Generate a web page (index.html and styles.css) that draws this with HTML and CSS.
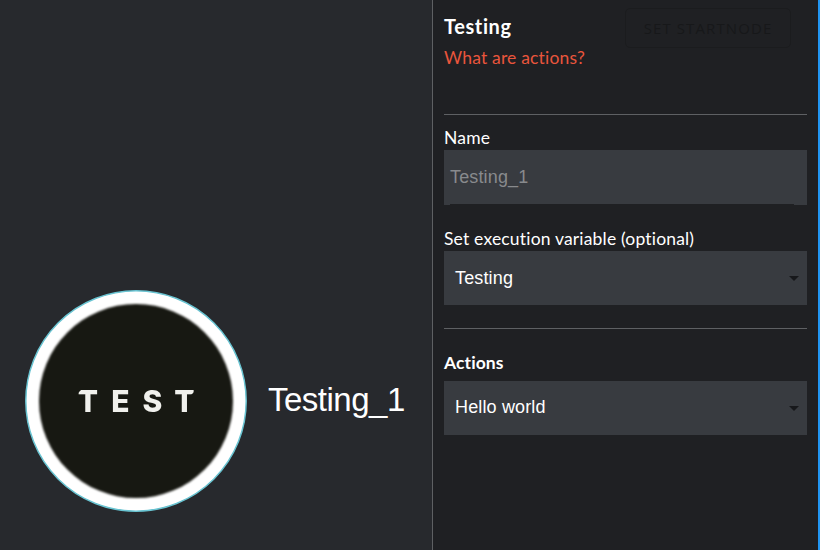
FILE: index.html
```html
<!DOCTYPE html>
<html lang="en">
<head>
<meta charset="utf-8">
<title>Workflow editor</title>
<link rel="stylesheet" href="styles.css">
</head>
<body>
<div class="editor">
  <main class="canvas">
    <div class="node">
      <svg class="node-image" viewBox="0 0 224 224" role="img" aria-label="Test">
        <circle cx="112" cy="112" r="110.2" class="ring"/>
        <circle cx="112" cy="112" r="97" class="disc"/>
        <g class="logo">
          <text x="64" y="123.3">T</text>
          <text x="96.3" y="123.3">E</text>
          <text x="128.5" y="123.3">S</text>
          <text x="160.5" y="123.3">T</text>
        </g>
        <path class="cut" d="M53 100h5l-5 5zM166 107h6v-6z"/>
      </svg>
      <span class="node-label">Testing_1</span>
    </div>
  </main>
  <aside class="panel">
    <header class="head">
      <div>
        <h1 class="title">Testing</h1>
        <a class="help">What are actions?</a>
      </div>
      <button class="start" disabled>SET STARTNODE</button>
    </header>
    <section class="group fields">
      <label class="label name">Name</label>
      <div class="field input"><span class="ph">Testing_1</span></div>
      <label class="label variable">Set execution variable (optional)</label>
      <div class="field select"><span>Testing</span><svg class="arrow" viewBox="0 0 10 5"><path d="M0 0l5 5 5-5z"/></svg></div>
    </section>
    <section class="group actions">
      <h2 class="subtitle">Actions</h2>
      <div class="field select"><span class="action-name">Hello world</span><svg class="arrow" viewBox="0 0 10 5"><path d="M0 0l5 5 5-5z"/></svg></div>
    </section>
  </aside>
</div>
</body>
</html>
```
FILE: styles.css
```css
* { box-sizing: border-box; }
body { margin: 0; background: #1f2023; color: #fff; font-family: Lato, sans-serif; }
.editor { display: flex; width: 820px; height: 550px; overflow: hidden; }
.canvas { position: relative; width: 432px; background: #27292d; }
.node { position: absolute; left: 24px; top: 289px; display: flex; align-items: center; }
.node-image { width: 224px; height: 224px; flex: none; }
.ring { fill: #fff; stroke: #69c4d2; stroke-width: 1.5; }
.disc { fill: #171812; filter: blur(0.8px); }
.cut { fill: #171812; }
.logo { fill: #f0f0ec; font: 800 30px Inter, sans-serif; filter: blur(0.7px); text-anchor: middle; }
.node-label { margin-left: 20px; padding-bottom: 2px; font: 33px/38px "Liberation Sans", sans-serif; letter-spacing: -0.5px; }
.panel { width: 388px; border-left: 1px solid #5e6063; border-right: 2px solid #2196f3; padding: 0 11px; background: #1f2023; }
.head { display: flex; justify-content: space-between; height: 114px; }
.title { margin: 13px 0 0; font-size: 20px; line-height: 26px; font-weight: 700; letter-spacing: .6px; }
.help { display: block; margin-top: 6px; color: #e9553c; font-size: 17.5px; line-height: 26px; letter-spacing: .18px; }
.start { width: 166px; height: 40px; margin: 8px 16px 0 0; padding: 0; border: 1px solid #1b1c1e; border-radius: 5px; background: transparent; color: #17181a; font: 15px "Open Sans", sans-serif; letter-spacing: 1.1px; }
.group { border-top: 1px solid #5e6063; }
.fields { height: 214px; padding-top: 11px; }
.label { display: block; height: 24px; font-size: 17.5px; line-height: 23px; letter-spacing: .18px; }
.variable { margin-top: 22px; }
.field { display: flex; align-items: center; height: 54px; background: #383b40; font: 18px/22px "Liberation Sans", sans-serif; letter-spacing: .15px; }
.input { height: 55px; padding: 0 0 2px 6px; position: relative; color: #888a8d; }
.input::after { content: ""; position: absolute; left: 6px; right: 13px; bottom: 0; height: 1px; background: #1f2023; }
.select { justify-content: space-between; padding: 0 8px 0 11px; }
.action-name { padding-bottom: 2px; }
.arrow { width: 10px; height: 5px; fill: #17181b; }
.actions { padding-top: 22px; }
.subtitle { margin: 0; height: 30px; font-size: 17.5px; line-height: 23px; font-weight: 700; letter-spacing: .1px; }
```
